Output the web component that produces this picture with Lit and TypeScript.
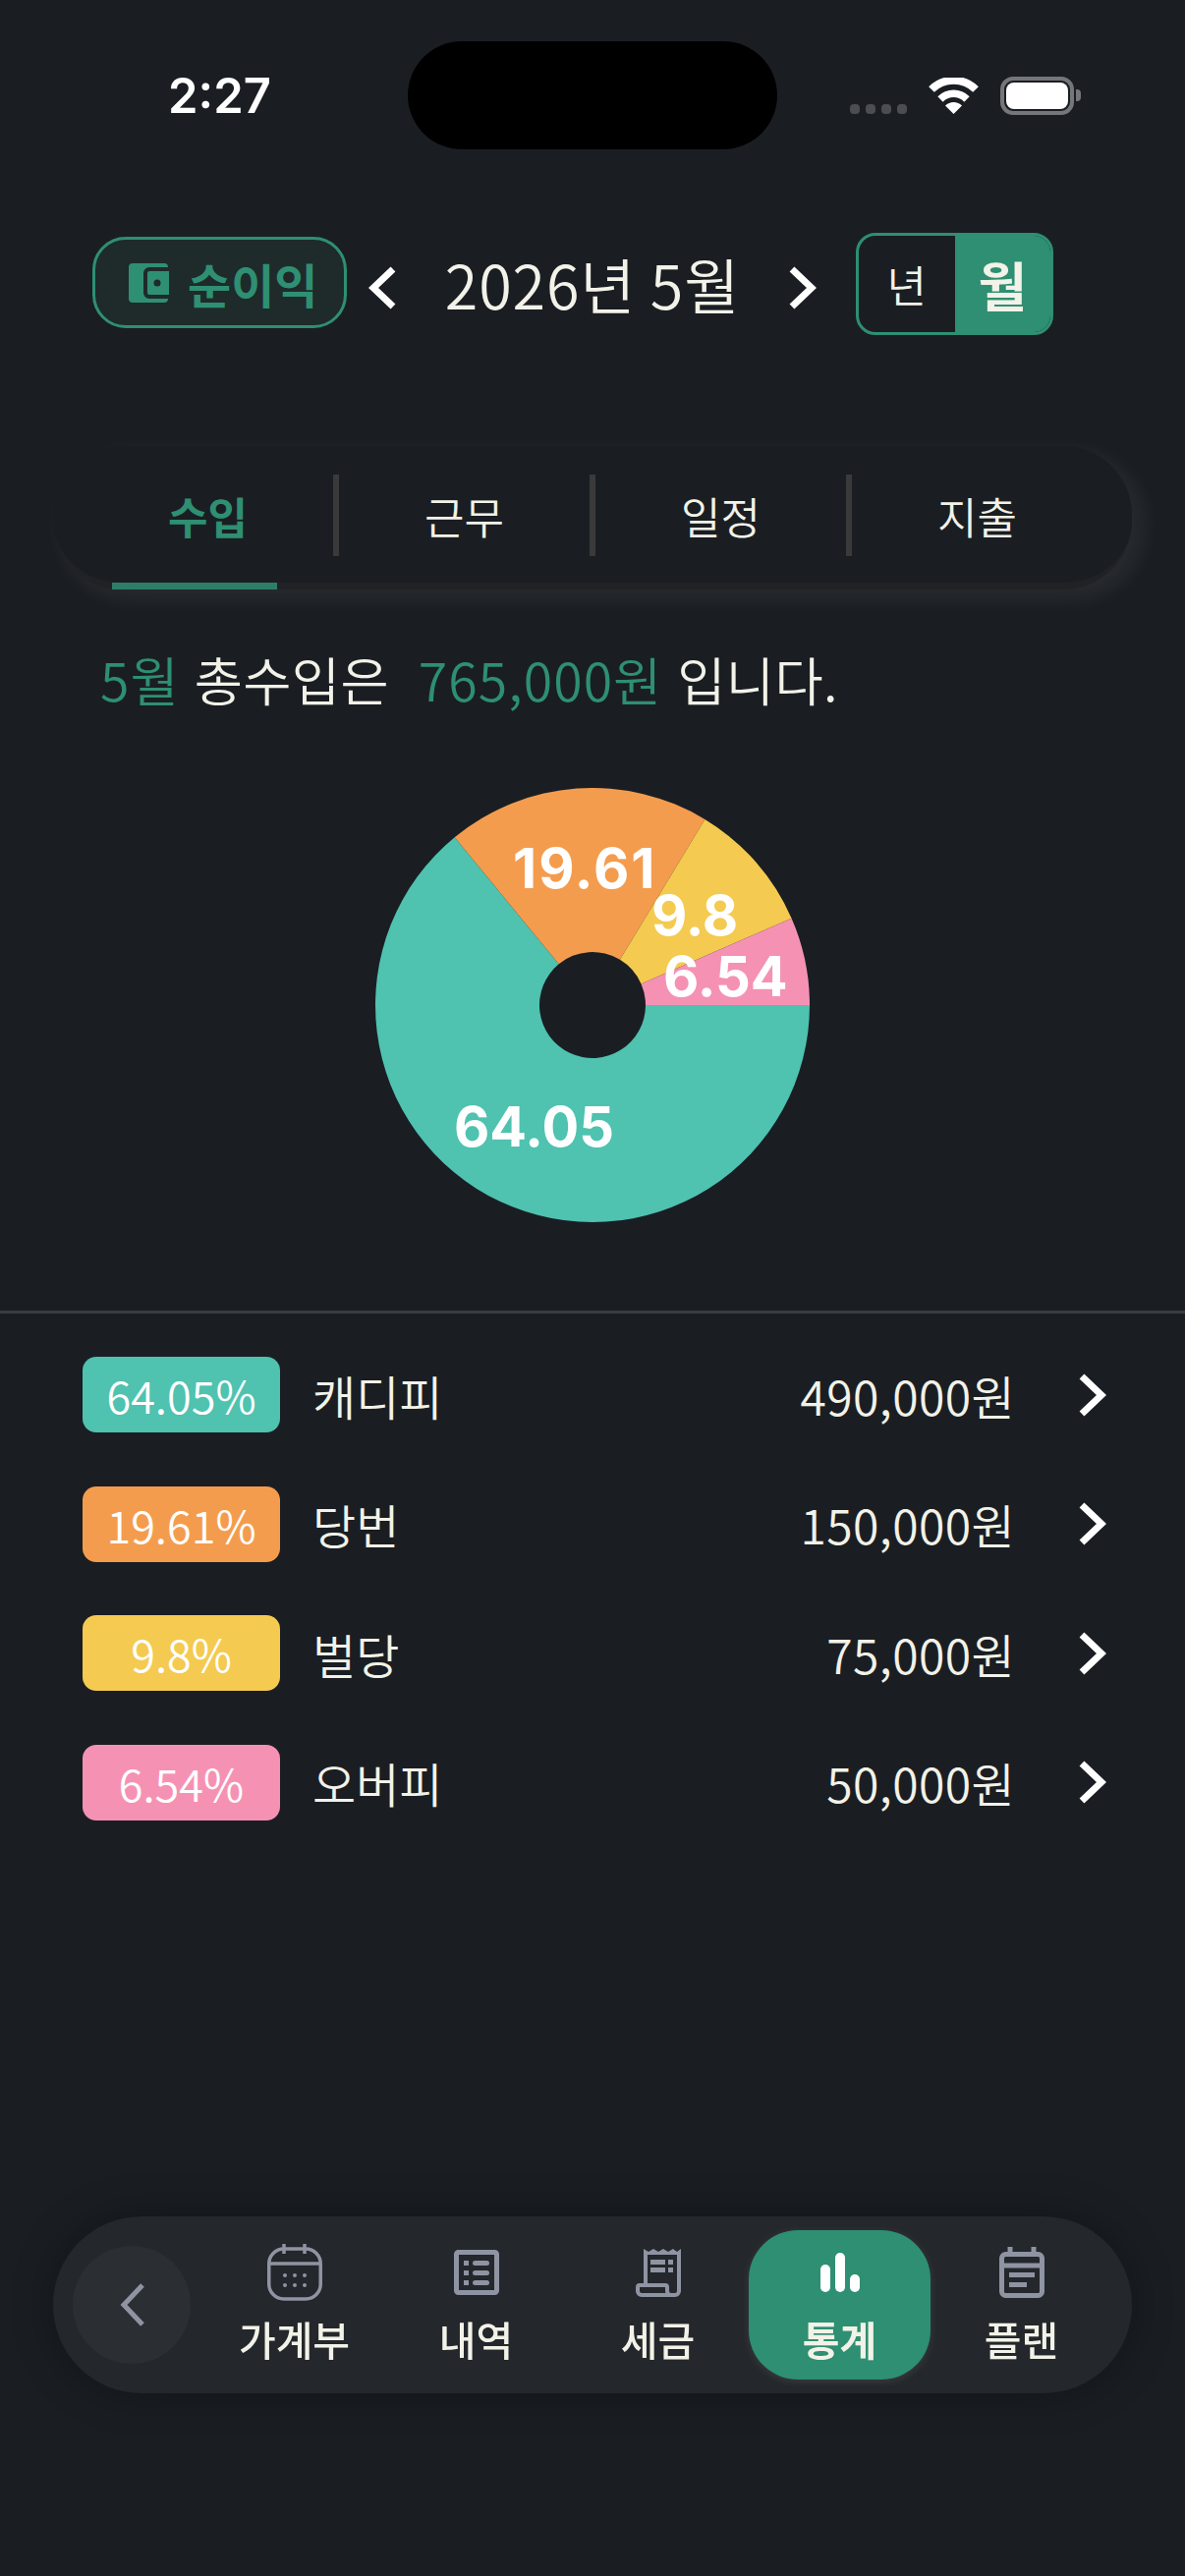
import { LitElement, html, css, svg } from 'lit';
import { customElement } from 'lit/decorators.js';

const CX = 221;
const CY = 221;
const R = 221;
const HOLE = 54;

const slices = [
  { name: '캐디피', pct: 64.05, amount: '490,000원', color: '#4fc2b0', lx: 80, ly: 365, track: 0 },
  { name: '당번', pct: 19.61, amount: '150,000원', color: '#f49c4e', lx: 140, ly: 102, track: 2 },
  { name: '벌당', pct: 9.8, amount: '75,000원', color: '#f4ca50', lx: 281, ly: 150, track: 0 },
  { name: '오버피', pct: 6.54, amount: '50,000원', color: '#f592b4', lx: 293, ly: 212, track: 0 },
];

const navItems = ['가계부', '내역', '세금', '통계', '플랜'];
const tabs = ['수입', '근무', '일정', '지출'];

function wedge(from: number, to: number) {
  const a0 = (from / 100) * Math.PI * 2;
  const a1 = (to / 100) * Math.PI * 2;
  const large = a1 - a0 > Math.PI ? 1 : 0;
  const p = (a: number, r: number) => `${CX + r * Math.cos(a)} ${CY + r * Math.sin(a)}`;
  return `M${p(a0, R)} A${R} ${R} 0 ${large} 1 ${p(a1, R)} L${p(a1, HOLE)} A${HOLE} ${HOLE} 0 ${large} 0 ${p(a0, HOLE)} Z`;
}

const chevron = (dir: 'left' | 'right') => html`
  <svg class="chev" viewBox="0 0 29 44" width="29" height="44">
    <path d=${dir === 'left' ? 'M25 3 L5 22 L25 41' : 'M4 3 L24 22 L4 41'} fill="none" stroke="#fff" stroke-width="7" />
  </svg>
`;

const navIcons = [
  html`<svg viewBox="0 0 56 58" width="56" height="58" fill="none" stroke="#8f94a3" stroke-width="3.5">
    <rect x="1.75" y="5" width="52.5" height="51" rx="15" />
    <path d="M1.5 20H54.5M17 0V10M38 0V10" />
    <g fill="#8f94a3" stroke="none">
      <circle cx="18" cy="32" r="2" /><circle cx="28" cy="32" r="2" /><circle cx="38" cy="32" r="2" />
      <circle cx="18" cy="42" r="2" /><circle cx="28" cy="42" r="2" /><circle cx="38" cy="42" r="2" />
    </g>
  </svg>`,
  html`<svg viewBox="0 0 46 46" width="46" height="46" fill="none" stroke="#8f94a3">
    <rect x="2.5" y="2.5" width="41" height="41" rx="2" stroke-width="5" />
    <g fill="#8f94a3" stroke="none">
      <rect x="10" y="11" width="5" height="5" /><rect x="10" y="21" width="5" height="5" /><rect x="10" y="31" width="5" height="5" />
      <rect x="19" y="11" width="17" height="5" rx="2.5" /><rect x="19" y="21" width="17" height="5" rx="2.5" /><rect x="19" y="31" width="17" height="5" rx="2.5" />
    </g>
  </svg>`,
  html`<svg viewBox="0 0 46 50" width="46" height="50" fill="none" stroke="#8f94a3" stroke-width="4">
    <path d="M10 4V38M44 4V44a4 4 0 0 1-4 4H6a4 4 0 0 1-4-4V40a2 2 0 0 1 2-2H30a2 2 0 0 1 2 2V44a4 4 0 0 0 4 4" />
    <path d="M8 7V1L13 4L18 1L23 4L28 1L33 4L38 1L42 4L46 1V7Z" fill="#8f94a3" stroke="none" />
    <g fill="#8f94a3" stroke="none">
      <rect x="15" y="12" width="15" height="5" /><rect x="15" y="20" width="15" height="5" />
      <rect x="33" y="12" width="5" height="5" /><rect x="33" y="20" width="5" height="5" />
    </g>
  </svg>`,
  html`<svg viewBox="0 0 40 40" width="40" height="40" fill="#fff">
    <rect x="0" y="12" width="10" height="28" rx="5" />
    <rect x="15" y="0" width="10" height="40" rx="5" />
    <rect x="30" y="22" width="10" height="18" rx="5" />
  </svg>`,
  html`<svg viewBox="0 0 46 52" width="46" height="52" fill="none" stroke="#8f94a3" stroke-width="5">
    <rect x="2.5" y="7.5" width="41" height="42" rx="4" />
    <path d="M2.5 19H43.5M11 0V8M35 0V8" />
    <g fill="#8f94a3" stroke="none">
      <rect x="10" y="26" width="26" height="5" /><rect x="10" y="36" width="18" height="5" />
    </g>
  </svg>`,
];

@customElement('app-root')
export class AppRoot extends LitElement {
  static styles = css`
    :host {
      display: block;
      width: 1206px;
      height: 2622px;
      overflow: hidden;
      background: #1a1e23;
      color: #f2f2e8;
      font-family: 'Noto Sans CJK KR', 'Noto Sans', sans-serif;
    }

    .status {
      display: flex;
      align-items: flex-start;
      height: 152px;
      padding: 42px 0 0 171px;
      box-sizing: border-box;
    }
    .time {
      width: 244px;
      margin-top: 29px;
      font-family: Inter, sans-serif;
      font-size: 49px;
      line-height: 54px;
      font-weight: 600;
      color: #fff;
    }
    .island {
      width: 376px;
      height: 110px;
      border-radius: 55px;
      background: #000;
    }
    .signal {
      display: flex;
      gap: 6px;
      margin: 64px 0 0 74px;
    }
    .signal i {
      width: 10px;
      height: 10px;
      border-radius: 4px;
      background: #4b4d50;
    }
    .wifi {
      margin: 37px 0 0 22px;
    }
    .battery {
      position: relative;
      width: 75px;
      height: 39px;
      margin: 36px 0 0 22px;
      box-sizing: border-box;
      border: 4px solid #75767a;
      border-radius: 13px;
      padding: 2px;
    }
    .battery i {
      display: block;
      height: 100%;
      background: #fff;
      border-radius: 8px;
    }
    .battery::after {
      content: '';
      position: absolute;
      left: 73px;
      top: 9px;
      width: 5px;
      height: 12px;
      border-radius: 0 4px 4px 0;
      background: #75767a;
    }

    .head {
      display: flex;
      align-items: center;
      margin-top: 85px;
      padding-left: 94px;
      height: 104px;
    }
    .kind {
      display: flex;
      align-items: center;
      gap: 19px;
      width: 259px;
      height: 93px;
      margin-top: -3px;
      padding-left: 34px;
      box-sizing: border-box;
      border: 3px solid #2e8f72;
      border-radius: 34px;
      background: #1f2a2b;
      color: #2e8f72;
      font-size: 48px;
      font-weight: 700;
    }
    .chev {
      flex: none;
      display: block;
    }
    .head .chev {
      margin-top: 8px;
    }
    .head .chev:first-of-type {
      margin-left: 22px;
    }
    .title {
      width: 398px;
      margin-top: -2px;
      text-align: center;
      font-size: 61px;
      letter-spacing: 0.9px;
      font-weight: 350;
      white-space: nowrap;
    }
    .range {
      display: flex;
      width: 201px;
      height: 104px;
      margin-left: 40px;
      box-sizing: border-box;
      border: 3px solid #2e8f72;
      border-radius: 20px;
      overflow: hidden;
      font-size: 44px;
      font-weight: 350;
    }
    .range span {
      flex: 1;
      display: flex;
      align-items: center;
      justify-content: center;
    }
    .range .on {
      background: #2e8f72;
      font-size: 54px;
      font-weight: 700;
    }

    .tabs {
      position: relative;
      display: flex;
      height: 146px;
      margin: 113px 54px 0;
      padding: 29px 27px 0 30px;
      box-sizing: border-box;
      border-bottom: 7px solid #202225;
      border-radius: 70px;
      background: #1a1e23;
      box-shadow: 10px 8px 20px 3px rgba(255, 255, 255, 0.06);
    }
    .tab {
      flex: 0 0 261px;
      height: 83px;
      display: flex;
      align-items: center;
      justify-content: center;
      box-sizing: border-box;
      border-right: 6px solid #3a3a3a;
      font-size: 44px;
      font-weight: 350;
    }
    .tab:nth-child(4) {
      border-right-color: transparent;
    }
    .tab.on {
      color: #2e8f72;
      font-weight: 700;
    }
    .bar {
      position: absolute;
      left: 60px;
      bottom: -7px;
      width: 168px;
      height: 7px;
      background: #2e7d68;
    }

    .summary {
      margin: 53px 0 0 102px;
      font-size: 53.5px;
      line-height: 76px;
      letter-spacing: 0.4px;
      word-spacing: 2.5px;
      font-weight: 350;
      white-space: pre;
    }
    .summary b {
      color: #2e8f72;
      font-weight: inherit;
      letter-spacing: 1.1px;
    }

    .chart {
      display: block;
      margin: 73px 0 0 382px;
    }
    .chart text {
      font-family: Inter, sans-serif;
      font-size: 56px;
      font-weight: 700;
      fill: #fff;
    }

    .rule {
      height: 3px;
      margin-top: 90px;
      background: #3a3c3e;
    }

    .rows {
      display: flex;
      flex-direction: column;
      gap: 54.5px;
      margin-top: 44px;
      padding: 0 80px 0 84px;
    }
    .row {
      display: flex;
      align-items: center;
      height: 77px;
      font-size: 48px;
      font-weight: 350;
    }
    .pct {
      flex: none;
      width: 201px;
      height: 77px;
      display: flex;
      align-items: center;
      justify-content: center;
      border-radius: 14px;
      color: #fff;
      font-size: 45px;
    }
    .name {
      flex: 1;
      margin-left: 33px;
    }
    .amount {
      margin-right: 64px;
      letter-spacing: 0.4px;
    }

    .nav {
      position: fixed;
      left: 54px;
      top: 2256px;
      width: 1098px;
      height: 180px;
      display: flex;
      align-items: center;
      padding-left: 20px;
      box-sizing: border-box;
      border-radius: 90px;
      background: #24272b;
      box-shadow: 0 0 40px rgba(0, 0, 0, 0.35);
    }
    .back {
      flex: none;
      width: 120px;
      height: 120px;
      margin-right: 13px;
      display: flex;
      align-items: center;
      justify-content: center;
      border-radius: 50%;
      background: #2b2e32;
    }
    .item {
      flex: 0 0 185px;
      height: 152px;
      display: flex;
      flex-direction: column;
      align-items: center;
      box-sizing: border-box;
      border-radius: 50px;
      font-size: 41px;
      line-height: 46px;
      font-weight: 500;
    }
    .item .ico {
      height: 72px;
      margin-top: 7px;
      margin-bottom: 8px;
      display: flex;
      align-items: center;
    }
    .item.on {
      background: #2e8f72;
      font-weight: 700;
      box-shadow: 0 2px 8px rgba(255, 255, 255, 0.1);
    }
  `;

  renderPie() {
    let at = 0;
    return html`
      <svg class="chart" viewBox="0 0 442 442" width="442" height="442">
        ${slices.map((s) => {
          const d = wedge(at, at + s.pct);
          at += s.pct;
          return svg`<path d=${d} fill=${s.color} />`;
        })}
        ${slices.map((s) => svg`<text x=${s.lx} y=${s.ly} letter-spacing=${s.track}>${s.pct}</text>`)}
      </svg>
    `;
  }

  render() {
    return html`
      <div class="status">
        <div class="time">2:27</div>
        <div class="island"></div>
        <div class="signal"><i></i><i></i><i></i><i></i></div>
        <svg class="wifi" viewBox="0 0 51 37" width="51" height="37">
          <path d="M3 12 A32 32 0 0 1 48 12" fill="none" stroke="#fff" stroke-width="8" />
          <path d="M12 22 A19 19 0 0 1 39 22" fill="none" stroke="#fff" stroke-width="7.5" />
          <path d="M25.5 37 L17 28.5 A12 12 0 0 1 34 28.5 Z" fill="#fff" />
        </svg>
        <div class="battery"><i></i></div>
      </div>

      <div class="head">
        <div class="kind">
          <svg viewBox="0 0 41 40" width="41" height="40">
            <rect width="40" height="40" rx="4" fill="#2e8f72" />
            <path d="M41 6H21a4 4 0 0 0-4 4V30a4 4 0 0 0 4 4H41" fill="#2e8f72" stroke="#1f2a2b" stroke-width="4" />
            <circle cx="29" cy="20" r="3.5" fill="#1f2a2b" />
          </svg>
          <span>순이익</span>
        </div>
        ${chevron('left')}
        <div class="title">2026년 5월</div>
        ${chevron('right')}
        <div class="range"><span>년</span><span class="on">월</span></div>
      </div>

      <div class="tabs">
        ${tabs.map((t, i) => html`<div class="tab ${i === 0 ? 'on' : ''}">${t}</div>`)}
        <div class="bar"></div>
      </div>

      <div class="summary"><b>5월</b> 총수입은  <b>765,000원</b> 입니다.</div>

      ${this.renderPie()}

      <div class="rule"></div>

      <div class="rows">
        ${slices.map(
          (s) => html`
            <div class="row">
              <div class="pct" style="background:${s.color}">${s.pct}%</div>
              <div class="name">${s.name}</div>
              <div class="amount">${s.amount}</div>
              ${chevron('right')}
            </div>
          `
        )}
      </div>

      <div class="nav">
        <div class="back">
          <svg viewBox="0 0 25 44" width="25" height="44">
            <path d="M23 2 L4 22 L23 42" fill="none" stroke="#8f94a3" stroke-width="5" />
          </svg>
        </div>
        ${navItems.map(
          (label, i) => html`
            <div class="item ${i === 3 ? 'on' : ''}">
              <div class="ico">${navIcons[i]}</div>
              <span>${label}</span>
            </div>
          `
        )}
      </div>
    `;
  }
}
